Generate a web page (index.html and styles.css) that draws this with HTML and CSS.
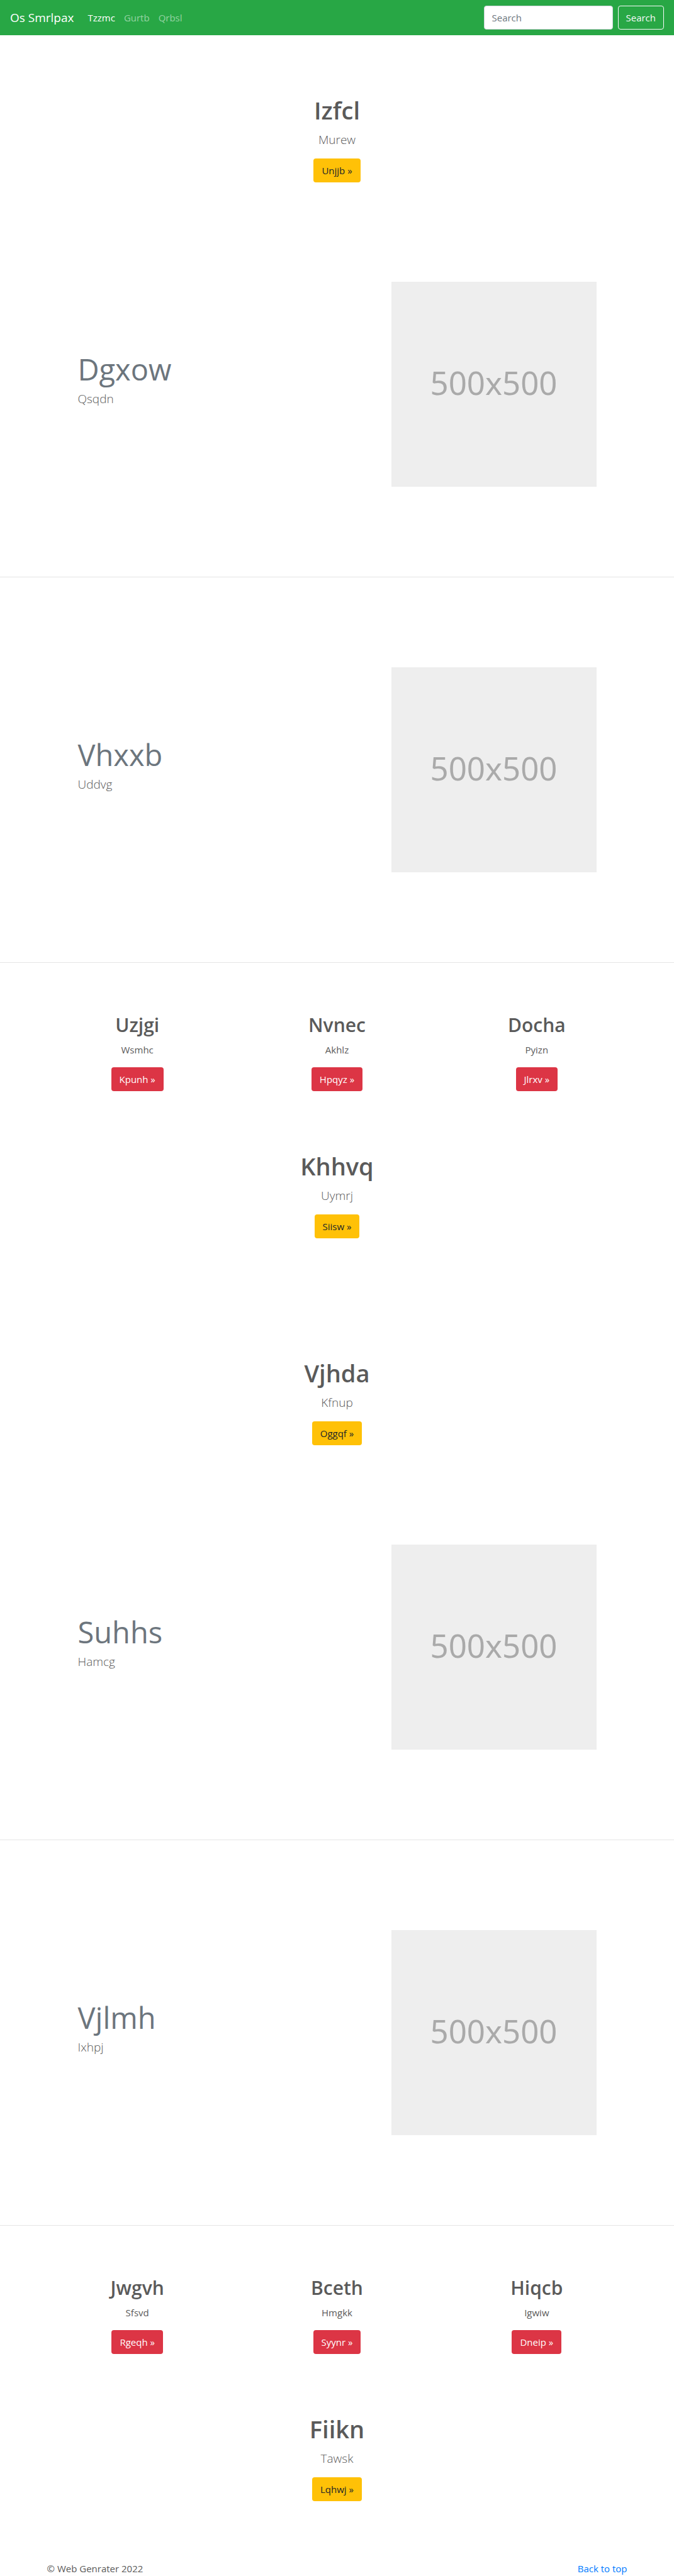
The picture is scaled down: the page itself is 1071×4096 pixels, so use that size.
FILE: index.html
```html
<!DOCTYPE html>
<html lang="en">
<head>
<meta charset="utf-8">
<meta name="viewport" content="width=device-width, initial-scale=1">
<title>Os Smrlpax</title>
<link rel="stylesheet" href="styles.css">
</head>
<body>
<header class="navbar" id="top">
  <a class="brand" href="#top">Os Smrlpax</a>
  <nav class="nav-links">
    <a class="nav-link active" href="#">Tzzmc</a>
    <a class="nav-link" href="#">Gurtb</a>
    <a class="nav-link" href="#">Qrbsl</a>
  </nav>
  <form class="search">
    <input class="search-input" type="search" placeholder="Search" aria-label="Search">
    <button class="btn btn-outline" type="button">Search</button>
  </form>
</header>
<main>
  <section class="hero">
    <h1 class="hero-title">Izfcl</h1>
    <p class="lead">Murew</p>
    <a class="btn btn-warning" href="#">Unjjb »</a>
  </section>
  <section class="featurette">
    <div class="container featurette-row">
      <div class="featurette-text">
        <h2 class="featurette-title">Dgxow</h2>
        <p class="lead">Qsqdn</p>
      </div>
      <div class="placeholder">500x500</div>
    </div>
  </section>
  <section class="featurette">
    <div class="container featurette-row">
      <div class="featurette-text">
        <h2 class="featurette-title">Vhxxb</h2>
        <p class="lead">Uddvg</p>
      </div>
      <div class="placeholder">500x500</div>
    </div>
  </section>
  <section class="container cards">
    <div class="card">
      <h2 class="card-title">Uzjgi</h2>
      <p class="card-text">Wsmhc</p>
      <a class="btn btn-danger" href="#">Kpunh »</a>
    </div>
    <div class="card">
      <h2 class="card-title">Nvnec</h2>
      <p class="card-text">Akhlz</p>
      <a class="btn btn-danger" href="#">Hpqyz »</a>
    </div>
    <div class="card">
      <h2 class="card-title">Docha</h2>
      <p class="card-text">Pyizn</p>
      <a class="btn btn-danger" href="#">Jlrxv »</a>
    </div>
  </section>
  <section class="hero hero-closing">
    <h1 class="hero-title">Khhvq</h1>
    <p class="lead">Uymrj</p>
    <a class="btn btn-warning" href="#">Siisw »</a>
  </section>
  <section class="hero">
    <h1 class="hero-title">Vjhda</h1>
    <p class="lead">Kfnup</p>
    <a class="btn btn-warning" href="#">Oggqf »</a>
  </section>
  <section class="featurette">
    <div class="container featurette-row">
      <div class="featurette-text">
        <h2 class="featurette-title">Suhhs</h2>
        <p class="lead">Hamcg</p>
      </div>
      <div class="placeholder">500x500</div>
    </div>
  </section>
  <section class="featurette">
    <div class="container featurette-row">
      <div class="featurette-text">
        <h2 class="featurette-title">Vjlmh</h2>
        <p class="lead">Ixhpj</p>
      </div>
      <div class="placeholder">500x500</div>
    </div>
  </section>
  <section class="container cards">
    <div class="card">
      <h2 class="card-title">Jwgvh</h2>
      <p class="card-text">Sfsvd</p>
      <a class="btn btn-danger" href="#">Rgeqh »</a>
    </div>
    <div class="card">
      <h2 class="card-title">Bceth</h2>
      <p class="card-text">Hmgkk</p>
      <a class="btn btn-danger" href="#">Syynr »</a>
    </div>
    <div class="card">
      <h2 class="card-title">Hiqcb</h2>
      <p class="card-text">Igwiw</p>
      <a class="btn btn-danger" href="#">Dneip »</a>
    </div>
  </section>
  <section class="hero hero-closing">
    <h1 class="hero-title">Fiikn</h1>
    <p class="lead">Tawsk</p>
    <a class="btn btn-warning" href="#">Lqhwj »</a>
  </section>
</main>
<footer class="container footer">
  <span>© Web Genrater 2022</span>
  <a class="footer-link" href="#top">Back to top</a>
</footer>
</body>
</html>
```
FILE: styles.css
```css
* {
  box-sizing: border-box;
}

body {
  margin: 0;
  background: #fff;
  color: #5a5a5a;
  font-family: "Open Sans", "Noto Sans", sans-serif;
  font-size: 15px;
  line-height: 24px;
}

h1, h2, p {
  margin: 0;
}

a {
  text-decoration: none;
}

.container {
  width: 100%;
  max-width: 952px;
  margin: 0 auto;
}

/* Navigation bar */
.navbar {
  display: flex;
  align-items: center;
  height: 56px;
  padding: 0 16px;
  background: #28a745;
}

.brand {
  margin-right: 22px;
  color: #fff;
  font-size: 19px;
}

.nav-links {
  display: flex;
  gap: 14px;
}

.nav-link {
  color: rgba(255, 255, 255, 0.5);
}

.nav-link.active {
  color: #fff;
}

.search {
  display: flex;
  gap: 8px;
  margin-left: auto;
}

.search-input {
  width: 205px;
  height: 38px;
  padding: 0 12px;
  border: 1px solid #ced4da;
  border-radius: 4px;
  background: #fff;
  color: #495057;
  font: inherit;
}

.search-input::placeholder {
  color: #6c757d;
  opacity: 1;
}

/* Buttons */
.btn {
  display: inline-block;
  padding: 6px 12px;
  border: 1px solid transparent;
  border-radius: 4px;
  font: inherit;
  text-align: center;
}

.btn-outline {
  border-color: #f8f9fa;
  background: transparent;
  color: #f8f9fa;
}

.btn-warning {
  background: #ffc107;
  color: #212529;
}

.btn-danger {
  background: #dc3545;
  color: #fff;
}

/* Centred call to action */
.hero {
  display: flex;
  flex-direction: column;
  align-items: center;
  padding: 95px 16px 15px;
}

.hero-closing {
  padding-bottom: 95px;
}

.hero-title {
  margin-bottom: 8px;
  font-size: 38px;
  font-weight: 600;
  line-height: 48px;
}

.lead {
  margin-bottom: 15px;
  font-size: 19px;
  font-weight: 300;
  line-height: 30px;
}

/* Text beside a square picture */
.featurette {
  padding: 143px 0;
  border-bottom: 1px solid #e5e5e5;
}

.featurette-row {
  display: flex;
  align-items: center;
  justify-content: space-between;
  padding: 0 64px;
}

.featurette-title {
  margin-bottom: 4px;
  color: #6c757d;
  font-size: 47px;
  font-weight: 400;
  line-height: 56px;
}

.placeholder {
  display: flex;
  align-items: center;
  justify-content: center;
  width: 326px;
  aspect-ratio: 1;
  padding-bottom: 6px;
  background: #eee;
  color: #aaa;
  font-family: "Noto Sans", sans-serif;
  font-size: 51px;
}

/* Three columns of cards */
.cards {
  display: grid;
  grid-template-columns: repeat(3, 1fr);
  padding-top: 80px;
}

.card {
  display: flex;
  flex-direction: column;
  align-items: center;
}

.card-title {
  margin-bottom: 8px;
  font-size: 30px;
  font-weight: 600;
  line-height: 38px;
}

.card-text {
  margin-bottom: 16px;
}

/* Footer */
.footer {
  display: flex;
  justify-content: space-between;
  padding: 0 15px;
}

.footer-link {
  color: #007bff;
}
```
